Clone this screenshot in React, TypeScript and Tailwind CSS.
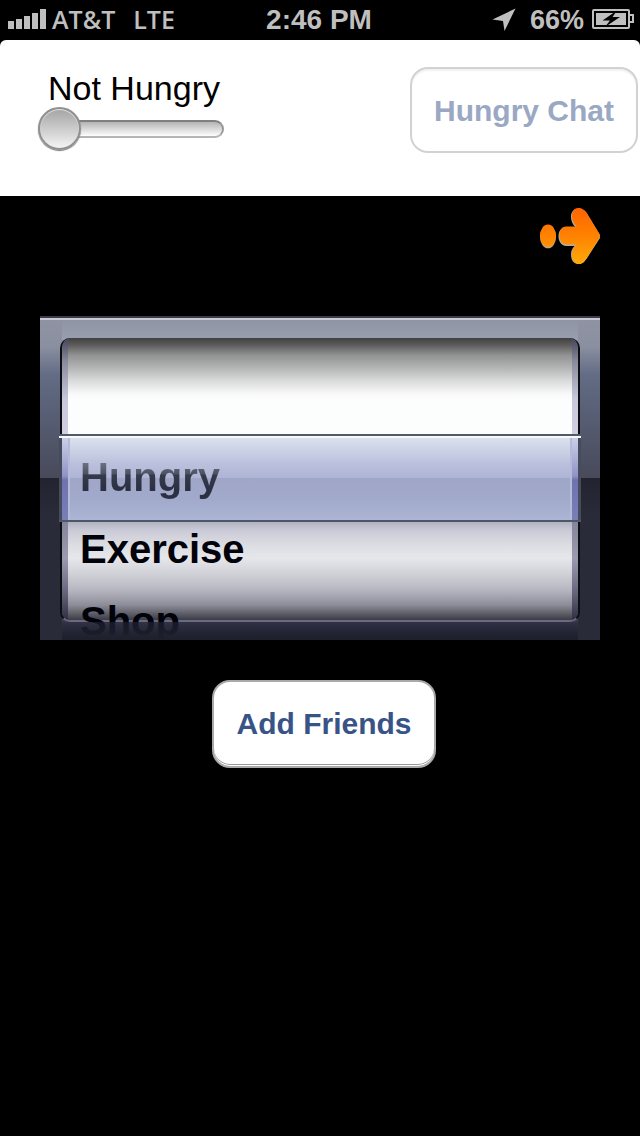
import { useState } from "react";

function SignalBars() {
  return (
    <svg width="38" height="20" viewBox="0 0 38 20" fill="#bfbfbf" aria-hidden="true">
      <rect x="0" y="12" width="6" height="8" />
      <rect x="8" y="10" width="6" height="10" />
      <rect x="16" y="7" width="6" height="13" />
      <rect x="24" y="4" width="6" height="16" />
      <rect x="32" y="0" width="6" height="20" />
    </svg>
  );
}

function StatusBar() {
  return (
    <div className="grid h-10 grid-cols-[1fr_auto_1fr] items-center bg-black pr-1.5 pl-2 text-[#bfbfbf]">
      <div className="flex items-center gap-1.5 pb-0.5">
        <SignalBars />
        <div className="flex gap-[18px] font-['Open_Sans',sans-serif] text-[25px] leading-7 font-semibold">
          <span>AT&amp;T</span>
          <span>LTE</span>
        </div>
      </div>
      <span className="pr-1 text-[28px] leading-8 font-bold">2:46 PM</span>
      <div className="flex items-center justify-end">
        <svg width="24" height="24" viewBox="0 0 24 24" fill="#bfbfbf" aria-hidden="true">
          <path d="M23.5 0.500 12.500 23 11 13 0.500 11.500Z" />
        </svg>
        <span className="ml-3.5 text-[27px] leading-8 font-bold">66%</span>
        <svg className="ml-2" width="42" height="22" viewBox="0 0 42 22" aria-hidden="true">
          <rect x="1" y="1" width="36" height="18" rx="1" fill="none" stroke="#bfbfbf" strokeWidth="2" />
          <rect x="4" y="4" width="30" height="12" fill="#bfbfbf" />
          <path d="M38 6h3v7h-3" fill="none" stroke="#bfbfbf" strokeWidth="2" />
          <path d="M25 1.500 10.500 11.500h7.500L13 18 28 8h-7.500Z" fill="#000" />
        </svg>
      </div>
    </div>
  );
}

function OrangeArrow() {
  return (
    <svg width="60" height="56" viewBox="0 0 60 56" aria-hidden="true">
      <defs>
        <linearGradient id="flame" x1="0" y1="0" x2="0" y2="56" gradientUnits="userSpaceOnUse">
          <stop offset="0" stopColor="#ff6400" />
          <stop offset="0.5" stopColor="#ff8200" />
          <stop offset="1" stopColor="#ffaa0a" />
        </linearGradient>
      </defs>
      <g fill="#b9a99a">
        <ellipse cx="8" cy="28.8" rx="8" ry="11.500" />
        <path d="M26 19.500H35.500C32.500 16 31 13 31 9 31 3.500 34 .5 38.500 .5 42 .5 44 2 46.500 5L60 27V30L47 50C44 54.500 42 56 38.500 56 34 56 31 52.500 31 46.500 31 43 32 40.500 34.500 38H26C21 37.500 18.500 33 18.500 28.500 18.500 23 21 19.500 26 19.500Z" />
      </g>
      <g fill="url(#flame)">
        <ellipse cx="8" cy="27.8" rx="8" ry="11.200" />
        <path d="M26 18.500H36.500C33.500 15 32 12 32 8.500 32 3 34.500 0 38.500 0 42 0 44 1.500 46.500 4.500L60 27V29L47 50C44 54.500 42 56 38.500 56 34.500 56 32 52.500 32 47 32 43 33 40 36.500 36.500H27C22 36.500 19.500 32 19.500 27.500 19.500 22.500 21.500 18.500 26 18.500Z" />
      </g>
    </svg>
  );
}

const activities = ["Hungry", "Exercise", "Shop"];

function ActivityPicker() {
  const [selected, setSelected] = useState("Hungry");
  return (
    <div
      role="listbox"
      aria-label="Activity"
      className="relative isolate mx-10 mt-13 h-81 overflow-hidden bg-[linear-gradient(#8f93a3_0,#8b90a1_30px,#636d85_58px,#5a6178_90px,#4d5163_140px,#484a59_162px,#22232f_162px,#2a2b38_200px,#2a2b38_324px)]"
    >
      <div className="absolute inset-x-[22px] top-0 -z-10 h-6 bg-linear-to-b from-[#8c92a2] to-[#9a9eb0]" />
      <div className="absolute inset-x-[22px] bottom-0 -z-10 h-6 bg-linear-to-b from-[#40415a] to-[#1f202c]" />
      <div className="absolute inset-x-0 top-0 -z-10 h-1 border-t-2 border-[#3a3d49] bg-[#c6cad0]" />

      <div className="absolute inset-x-5 top-[22px] -z-10 h-[284px] overflow-hidden rounded-[10px] border-x-2 border-b-2 border-x-[#0c0e10] border-b-[#696a7c] bg-[linear-gradient(#404040_0,#5c5c5c_7px,#909190_17px,#b9bbba_32px,#d7d9d8_42px,#f9f9f9_56px,#fcfdfd_62px,#fcfdfd_98px,#b2b2c2_184px,#c9cad6_192px,#dcdde2_207px,#e6e7eb_220px,#cfd0d6_237px,#b5b6c0_252px,#8c8d98_267px,#3b3b45_282px)]">
        <div className="absolute inset-y-0 left-0 w-1.5 bg-[linear-gradient(#44445a_0,#8b8b9e_24px,#c9c9dd_62px,#d0d0e2_96px,#84849a_184px,#9a9ab0_220px,#6d6d86_250px,#2f2f42_282px)]" />
        <div className="absolute inset-y-0 right-0 w-1.5 bg-[linear-gradient(#44445a_0,#8b8b9e_24px,#c9c9dd_62px,#d0d0e2_96px,#84849a_184px,#9a9ab0_220px,#6d6d86_250px,#2f2f42_282px)]" />
      </div>

      <div className="absolute inset-x-[19px] top-[118px] -z-10 h-22 border-y-2 border-t-[#505c6c] border-b-[#4b5869] bg-[linear-gradient(#f7f9fc_0,#f7f9fc_2px,#dce1ee_2px,#ccd2e6_14px,#b8bedb_30px,#aeb4d4_42px,#9fa6c7_42px,#a2aacc_64px,#adb4d4_84px)]">
        <div className="absolute top-0.5 bottom-0 left-0 w-[11px] border-r-2 border-l-3 border-r-[#b4bada] border-l-[#474b5e] bg-[linear-gradient(#ccd0e6,#8f94c4_38px,#6e73ae_42px,#7a7fb6)]" />
        <div className="absolute top-0.5 right-0 bottom-0 w-[11px] border-r-3 border-l-2 border-r-[#474b5e] border-l-[#b4bada] bg-[linear-gradient(#ccd0e6,#8f94c4_38px,#6e73ae_42px,#7a7fb6)]" />
      </div>

      <div className="flex flex-col px-10 pt-[125px] text-[40px] font-bold">
        {activities.map((name) => (
          <button
            key={name}
            type="button"
            role="option"
            aria-selected={name === selected}
            onClick={() => setSelected(name)}
            className="h-18 shrink-0 text-left leading-none text-[#02020a]"
          >
            <span
              className={
                name === selected
                  ? "bg-[linear-gradient(#777c8c_4px,#4d5262_19px,#363b4c_20px,#2b3042_34px)] bg-clip-text text-transparent"
                  : undefined
              }
            >
              {name}
            </span>
          </button>
        ))}
      </div>
      <div className="pointer-events-none absolute inset-x-[22px] bottom-0 h-[18px] bg-linear-to-b from-[#2c2d42]/50 to-[#1f202c]" />
    </div>
  );
}

export default function App() {
  const [hunger, setHunger] = useState(0);
  return (
    <div className="min-h-screen bg-black font-['Liberation_Sans',Arial,sans-serif]">
      <StatusBar />
      <header className="flex h-39 items-start justify-between rounded-t-md bg-white pt-[27px] pr-0.5 pl-[38px]">
        <div className="flex w-[186px] flex-col">
          <label htmlFor="hunger" className="pl-2.5 text-[34px] leading-[42px] whitespace-nowrap text-black">
            Not Hungry
          </label>
          <input
            id="hunger"
            type="range"
            min={0}
            max={100}
            value={hunger}
            onChange={(e) => setHunger(Number(e.target.value))}
            className="h-10 w-full appearance-none bg-transparent [&::-webkit-slider-runnable-track]:h-[18px] [&::-webkit-slider-runnable-track]:rounded-full [&::-webkit-slider-runnable-track]:border-2 [&::-webkit-slider-runnable-track]:border-[#999] [&::-webkit-slider-runnable-track]:border-t-[#808080] [&::-webkit-slider-runnable-track]:border-b-[#b5b5b5] [&::-webkit-slider-runnable-track]:bg-linear-to-b [&::-webkit-slider-runnable-track]:from-[#b4b4b4] [&::-webkit-slider-runnable-track]:to-white [&::-webkit-slider-thumb]:-mt-[15px] [&::-webkit-slider-thumb]:-ml-0.5 [&::-webkit-slider-thumb]:size-[43px] [&::-webkit-slider-thumb]:appearance-none [&::-webkit-slider-thumb]:rounded-full [&::-webkit-slider-thumb]:border-2 [&::-webkit-slider-thumb]:border-[#909090] [&::-webkit-slider-thumb]:bg-linear-to-b [&::-webkit-slider-thumb]:from-[#a4a4a4] [&::-webkit-slider-thumb]:to-[#f4f4f4] [&::-webkit-slider-thumb]:shadow-[inset_0_1px_1px_#e8e8e8,0_1px_1px_#777]"
          />
        </div>
        <button
          type="button"
          className="h-[86px] w-57 rounded-[18px] border-2 border-[#d2d2d2] bg-white text-[30px] font-bold text-[#9aa8c4] shadow-[inset_0_2px_2px_#f1f1f1]"
        >
          Hungry Chat
        </button>
      </header>

      <main className="flex flex-col">
        <button type="button" aria-label="Next" className="mt-3 mr-10 self-end">
          <OrangeArrow />
        </button>
        <ActivityPicker />
        <button
          type="button"
          className="mt-10 ml-2 h-22 w-56 self-center rounded-[18px] border-2 border-[#a9a9a9] bg-white pb-0.5 text-[30px] font-bold text-[#385487] shadow-[inset_0_-1px_0_#ffffff,inset_0_-2px_0_#999999]"
        >
          Add Friends
        </button>
      </main>
    </div>
  );
}
